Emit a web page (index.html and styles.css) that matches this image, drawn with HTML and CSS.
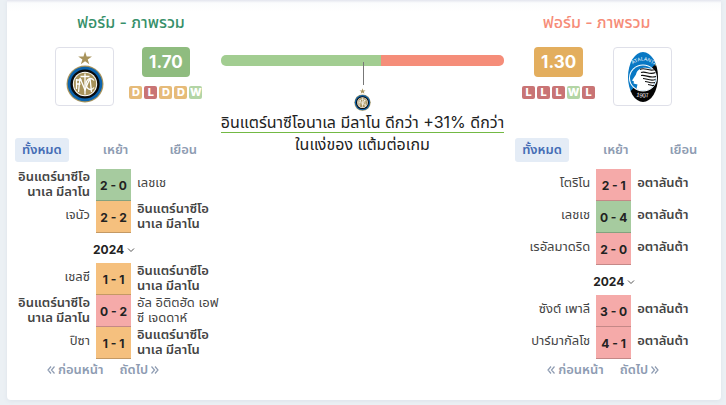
FILE: index.html
```html
<!DOCTYPE html>
<html lang="th">
<head>
  <meta charset="UTF-8">
  <title>ฟอร์ม - ภาพรวม</title>
  <link rel="stylesheet" href="styles.css">
</head>
<body>

<svg class="defs" width="0" height="0" aria-hidden="true">
  <symbol id="inter" viewBox="0 0 38 52">
    <path fill="#a8935b" d="M19 0l3 9.500h10l-8 5.500 3 9-8-5.600-8 5.600 3-9-8-5.500h10z" transform="translate(9 .5) scale(.53 .53)"/>
    <circle cx="19" cy="33" r="18.500" fill="#a8935b"/>
    <circle cx="19" cy="33" r="17.300" fill="#0b63ad"/>
    <circle cx="19" cy="33" r="14.600" fill="#0a0a0a"/>
    <circle cx="19" cy="33" r="12.200" fill="#fff"/>
    <circle cx="19" cy="33" r="11.200" fill="#a8935b"/>
    <g fill="none" stroke="#fff" stroke-width="1.300">
      <path d="M12.500 41l1.500-14 5 12 5-12 1.500 14"/>
      <path d="M19 22.500v21M14.500 25.500h9"/>
      <path d="M28 29.500a4.500 5.500 0 1 0 0 7"/>
      <path d="M10.500 28v10M10.500 29h5M10.500 33h4"/>
    </g>
  </symbol>
  <symbol id="chevron" viewBox="0 0 8 6">
    <path fill="none" stroke="#555" d="M1 1.500l3 3 3-3"/>
  </symbol>
  <symbol id="prev" viewBox="0 0 8 10">
    <path fill="none" stroke="currentColor" stroke-width="1.200" d="M4 1.500L1 5l3 3.500M7.500 1.500l-3 3.500 3 3.500"/>
  </symbol>
  <symbol id="next" viewBox="0 0 8 10">
    <path fill="none" stroke="currentColor" stroke-width="1.200" d="M.5 1.500l3 3.500-3 3.500M4 1.500l3 3.500-3 3.500"/>
  </symbol>
</svg>

<main class="card">

  <section class="team team-home">
    <h2>ฟอร์ม - ภาพรวม</h2>
    <div class="overview">
      <div class="crest"><svg class="logo-inter" role="img" aria-label="อินแตร์นาซีโอนาเล มีลาโน"><use href="#inter"/></svg></div>
      <div class="form">
        <div class="ppg good">1.70</div>
        <div class="results"><span class="d">D</span><span class="l">L</span><span class="d">D</span><span class="d">D</span><span class="w">W</span></div>
      </div>
    </div>
    <nav class="tabs">
      <button type="button" class="active">ทั้งหมด</button>
      <button type="button">เหย้า</button>
      <button type="button">เยือน</button>
    </nav>
    <table class="matches">
      <tr><td class="home own long">อินแตร์นาซีโอ<br>นาเล มีลาโน</td><td class="score win">2 - 0</td><td class="away">เลชเช</td></tr>
      <tr><td class="home">เจนัว</td><td class="score draw">2 - 2</td><td class="away own long">อินแตร์นาซีโอ<br>นาเล มีลาโน</td></tr>
      <tr class="year"><th colspan="3"><span>2024 <svg><use href="#chevron"/></svg></span></th></tr>
      <tr><td class="home">เชลซี</td><td class="score draw">1 - 1</td><td class="away own long">อินแตร์นาซีโอ<br>นาเล มีลาโน</td></tr>
      <tr><td class="home own long">อินแตร์นาซีโอ<br>นาเล มีลาโน</td><td class="score loss">0 - 2</td><td class="away long">อัล อิติตฮัด เอฟ<br>ซี เจดดาห์</td></tr>
      <tr><td class="home">ปิซา</td><td class="score draw">1 - 1</td><td class="away own long">อินแตร์นาซีโอ<br>นาเล มีลาโน</td></tr>
    </table>
    <nav class="pager">
      <button type="button"><svg><use href="#prev"/></svg> ก่อนหน้า</button>
      <button type="button">ถัดไป <svg><use href="#next"/></svg></button>
    </nav>
  </section>

  <section class="compare">
    <div class="bar"><span class="bar-home" style="width: 56.500%"></span><span class="bar-away"></span></div>
    <div class="pointer"></div>
    <svg class="logo-small"><use href="#inter"/></svg>
    <p><span class="better">อินแตร์นาซีโอนาเล มีลาโน ดีกว่า +31% ดีกว่า</span><br>ในแง่ของ แต้มต่อเกม</p>
  </section>

  <section class="team team-away">
    <h2>ฟอร์ม - ภาพรวม</h2>
    <div class="overview">
      <div class="form">
        <div class="ppg medium">1.30</div>
        <div class="results"><span class="l">L</span><span class="l">L</span><span class="l">L</span><span class="w">W</span><span class="l">L</span></div>
      </div>
      <div class="crest">
        <svg class="logo-atalanta" viewBox="0 0 30 50" role="img" aria-label="อตาลันต้า">
          <clipPath id="oval"><ellipse cx="15" cy="25" rx="15" ry="25"/></clipPath>
          <g clip-path="url(#oval)">
            <path fill="#0878c4" d="M0 0h30v10L0 43z"/>
            <path fill="#050505" d="M30 9v41H0v-8z"/>
            <ellipse cx="15" cy="26" rx="14" ry="13.500" fill="#fff"/>
            <ellipse cx="15" cy="26" rx="13" ry="12.500" fill="#0878c4"/>
            <path fill="#fff" d="M27.500 20c1.500 8-1 15-8 18-6 1.500-9 .5-11-1.500l1-4-4-1 .5-2-2-1 4-6c1-5 6-7.500 11-6.500l6 1z"/>
            <path fill="none" stroke="#111" stroke-width="1.100" d="M12 17.500c5-3 8 2.500 15 0M13 20.500c5-2 8 3 14.500 0M13 23.500c5-1 8 3 15 1M15 26.500c4 0 7 3 12.500 1M17 29.500c4 0 5 2 10 1M20 32.500c2 0 3 1 6 1"/>
          </g>
          <path id="arc-top" fill="none" d="M4 13q11-9 22 0"/>
          <path id="arc-bottom" fill="none" d="M6 44q9 3 18 0"/>
          <text class="crest-name"><textPath href="#arc-top" startOffset="1">ATALANTA</textPath></text>
          <text class="crest-year"><textPath href="#arc-bottom" startOffset="2">1907</textPath></text>
        </svg>
      </div>
    </div>
    <nav class="tabs">
      <button type="button" class="active">ทั้งหมด</button>
      <button type="button">เหย้า</button>
      <button type="button">เยือน</button>
    </nav>
    <table class="matches">
      <tr><td class="home">โตริโน</td><td class="score loss">2 - 1</td><td class="away own">อตาลันต้า</td></tr>
      <tr><td class="home">เลชเช</td><td class="score win">0 - 4</td><td class="away own">อตาลันต้า</td></tr>
      <tr><td class="home">เรอัลมาดริด</td><td class="score loss">2 - 0</td><td class="away own">อตาลันต้า</td></tr>
      <tr class="year"><th colspan="3"><span>2024 <svg><use href="#chevron"/></svg></span></th></tr>
      <tr><td class="home">ซังต์ เพาลี</td><td class="score loss">3 - 0</td><td class="away own">อตาลันต้า</td></tr>
      <tr><td class="home">ปาร์มากัลโช</td><td class="score loss">4 - 1</td><td class="away own">อตาลันต้า</td></tr>
    </table>
    <nav class="pager">
      <button type="button"><svg><use href="#prev"/></svg> ก่อนหน้า</button>
      <button type="button">ถัดไป <svg><use href="#next"/></svg></button>
    </nav>
  </section>

</main>

</body>
</html>
```
FILE: styles.css
```css
* { box-sizing: border-box; }
body {
	margin: 0;
	padding: 0 5px 5px 7px;
	background-color: #ebf0f4;
	color: #222;
	font-family: Inter, "Noto Sans Thai", Loma, Tahoma, sans-serif;
	font-size: 13px;
}
button {
	border: 0;
	background: none;
	padding: 0;
	font: inherit;
	color: inherit;
	cursor: pointer;
}
svg { display: block; }
.defs { position: absolute; }

.card {
	display: grid;
	grid-template-columns: 3fr 4fr 3fr;
	background: linear-gradient(#e3e5ee, #fbfcfd 3px, #fff 12px);
	border-radius: 0 0 4px 4px;
	box-shadow: 0 1px 4px #dde3ea;
	padding-bottom: 20px;
}
.team { min-width: 0; }

h2 {
	margin: 0;
	padding-top: 10px;
	height: 47px;
	font-size: 16px;
	line-height: 24px;
	font-weight: 500;
	text-align: center;
}
.team-home h2 { padding-left: 34px; color: #37906a; }
.team-away h2 { padding-right: 35px; color: #f68c78; }

.overview {
	display: flex;
	justify-content: center;
	gap: 15px;
	height: 91px;
}
.team-home .overview { padding-left: 30px; }
.team-away .overview { padding-right: 34px; gap: 18px; }
.crest {
	display: flex;
	align-items: center;
	justify-content: center;
	width: 59px;
	height: 59px;
	border: 1px solid #dfe0e9;
	border-radius: 4px;
}
.logo-inter { width: 38px; height: 52px; }
.logo-atalanta { width: 30px; height: 50px; }
.crest-name { font: 5px "Liberation Sans", sans-serif; fill: #fff; }
.crest-year { font: 6px "Liberation Sans", sans-serif; fill: #fff; }

.form {
	display: flex;
	flex-direction: column;
	align-items: center;
	gap: 9px;
}
.ppg {
	padding: 0 7px;
	border-radius: 4px;
	font-size: 17px;
	line-height: 30px;
	font-weight: 700;
	color: #fff;
}
.good { background-color: #8fbc7f; }
.medium { background-color: #e3ae5e; }
.results { display: flex; gap: 2px; }
.results span {
	width: 13px;
	border-radius: 2px;
	font-size: 11px;
	line-height: 13px;
	font-weight: 800;
	text-align: center;
	color: #fff;
}
.d { background-color: #e6bb79; }
.l { background-color: #c97475; }
.w { background-color: #b3d5a5; }

.tabs {
	display: flex;
	gap: 27px;
	padding-left: 8px;
	margin-bottom: 7px;
	color: #8e9cb2;
	font-weight: 600;
}
.tabs button {
	padding: 0 7px 2px;
	border-radius: 3px;
	line-height: 22px;
}
.tabs .active { background-color: #e4ecf6; color: #456cb5; }

.matches {
	width: 100%;
	table-layout: fixed;
	border-collapse: separate;
	border-spacing: 0;
	color: #444;
}
.matches td {
	height: 32px;
	padding: 0 6px 6px;
	line-height: 15px;
	white-space: nowrap;
}
.matches .long { padding-bottom: 2px; }
.matches .home { width: 89px; text-align: right; }
.matches .own { font-weight: 600; }
.matches .score {
	width: 35px;
	padding: 1px 0 0;
	border-bottom: 1px solid rgba(0, 0, 0, .2);
	font-size: 12px;
	font-weight: 700;
	text-align: center;
	color: #222;
}
.win { background-color: #a6cb9f; }
.draw { background-color: #f5c07e; }
.loss { background-color: #f5aaa9; }
.year th {
	height: 30px;
	padding: 5px 0 1px 86px;
	line-height: 24px;
	font-size: 12px;
	font-weight: 700;
	text-align: left;
	color: #222;
}
.year span { display: flex; align-items: center; gap: 3px; }
.year svg { width: 8px; height: 6px; }

.pager {
	display: flex;
	gap: 16px;
	padding-left: 40px;
	color: #8e9cb2;
	font-weight: 600;
	line-height: 21px;
}
.pager button { display: flex; align-items: center; gap: 3px; }
.pager svg { width: 8px; height: 10px; }

.compare {
	display: flex;
	flex-direction: column;
	align-items: center;
	padding: 55px 3px 0 0;
}
.bar {
	display: flex;
	align-self: stretch;
	height: 11px;
	border-radius: 5px;
	overflow: hidden;
}
.bar-home { background-color: #a2cd91; }
.bar-away { flex: 1; background-color: #f58d79; }
.pointer {
	width: 1px;
	height: 23px;
	margin: -4px 0 3px 2px;
	background-color: #777;
	z-index: 1;
}
.logo-small { width: 17px; height: 23px; }
.compare p {
	margin: 0;
	font-size: 16px;
	line-height: 22px;
	text-align: center;
	white-space: nowrap;
}
.better { border-bottom: 1px solid #73b944; }
```
